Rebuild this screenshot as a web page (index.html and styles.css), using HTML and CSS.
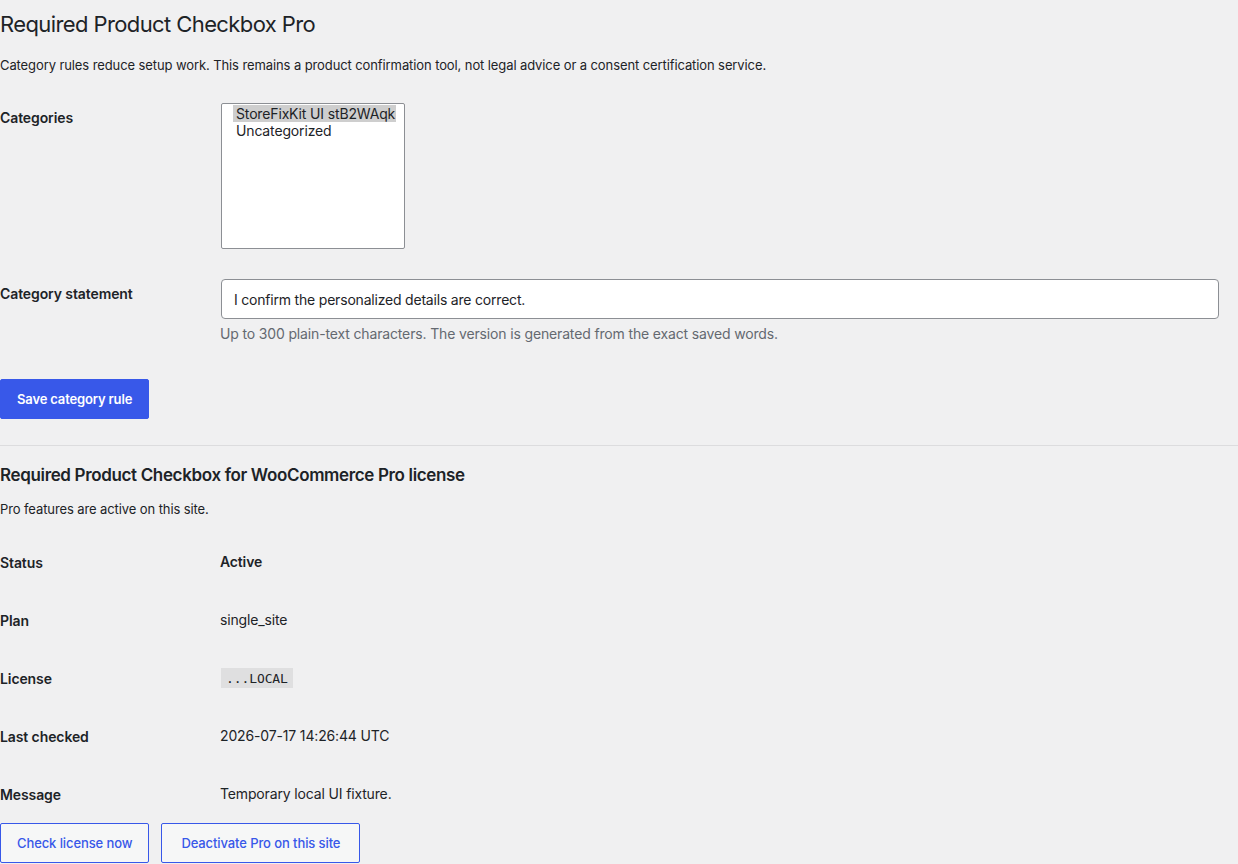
FILE: index.html
```html
<!DOCTYPE html>
<html lang="en">
<head>
    <meta charset="UTF-8">
    <meta name="viewport" content="width=device-width, initial-scale=1.0">
    <title>Required Product Checkbox Pro</title>
    <link rel="stylesheet" href="styles.css">
</head>
<body>
<div class="wrap">
    <h1>Required Product Checkbox Pro</h1>
    <p>Category rules reduce setup work. This remains a product confirmation tool, not legal advice or a consent certification service.</p>

    <form class="rule-form" onsubmit="return false">
        <table class="form-table">
            <tr>
                <th>Categories</th>
                <td>
                    <div class="cat-list">
                        <div class="cat-item selected">StoreFixKit UI stB2WAqk</div>
                        <div class="cat-item">Uncategorized</div>
                    </div>
                </td>
            </tr>
            <tr>
                <th>Category statement</th>
                <td>
                    <input type="text" class="large-text" value="I confirm the personalized details are correct.">
                    <p class="description">Up to 300 plain-text characters. The version is generated from the exact saved words.</p>
                </td>
            </tr>
        </table>
        <p class="submit"><button type="submit" class="button button-primary">Save category rule</button></p>
    </form>

    <hr>

    <h2>Required Product Checkbox for WooCommerce Pro license</h2>
    <p>Pro features are active on this site.</p>

    <table class="form-table license-table">
        <tr><th>Status</th><td><strong>Active</strong></td></tr>
        <tr><th>Plan</th><td>single_site</td></tr>
        <tr><th>License</th><td><code>...LOCAL</code></td></tr>
        <tr><th>Last checked</th><td>2026-07-17 14:26:44 UTC</td></tr>
        <tr><th>Message</th><td>Temporary local UI fixture.</td></tr>
    </table>

    <div class="license-actions">
        <button type="button" class="button">Check license now</button>
        <button type="button" class="button wide">Deactivate Pro on this site</button>
    </div>
</div>
</body>
</html>
```

FILE: styles.css
```css
body {
    margin: 0;
    background: #f0f0f1;
    color: #1d2327;
    font-family: Inter, "Noto Sans", sans-serif;
    font-size: 13px;
    line-height: 1.4em;
    letter-spacing: -0.1px;
}

.wrap h1 {
    font-size: 22px;
    font-weight: 400;
    line-height: 1.3;
    margin: 0;
    padding: 10px 0 4px;
    letter-spacing: -0.6px;
}

.wrap p {
    margin: 13px 0;
    line-height: 1.5;
}

.rule-form {
    margin: 0;
}

.form-table {
    border-collapse: collapse;
    width: 100%;
    margin-top: 0;
}

.rule-form .form-table {
    margin-top: 1px;
}

.form-table th {
    width: 200px;
    padding: 21px 10px 19px 0;
    text-align: left;
    vertical-align: top;
    font-size: 14px;
    font-weight: 600;
    line-height: 1.3;
    letter-spacing: -0.1px;
}

.form-table td {
    padding: 15px 10px;
    vertical-align: top;
    font-size: 14px;
    line-height: 1.3;
    letter-spacing: -0.15px;
}

.cat-list {
    box-sizing: border-box;
    width: 184px;
    height: 146px;
    margin-left: 1px;
    padding: 1px 8px 0 11px;
    background: #fff;
    border: 1px solid #8c8f94;
    border-radius: 2px;
}

.cat-item {
    padding: 0 3px;
    line-height: 17px;
    font-size: 14px;
    white-space: nowrap;
}

.cat-item.selected {
    background: #cecece;
}

.large-text {
    box-sizing: border-box;
    width: 99%;
    height: 40px;
    margin: 0 0 0 1px;
    padding: 0 12px;
    background: #fff;
    border: 1px solid #8c8f94;
    border-radius: 4px;
    color: #1d2327;
    font-family: inherit;
    font-size: 14px;
    letter-spacing: -0.2px;
}

.form-table td p.description {
    margin: 4px 0 0;
    color: #646970;
    font-size: 14px;
    line-height: 1.5;
}

.wrap p.submit {
    margin: 0;
    padding: 20px 0 0;
}

.button {
    box-sizing: border-box;
    height: 40px;
    padding: 0 16px;
    background: #f6f7f7;
    border: 1px solid #3858e9;
    border-radius: 2px;
    color: #3858e9;
    font-family: inherit;
    font-size: 13px;
    font-weight: 500;
    letter-spacing: -0.1px;
    cursor: pointer;
}

.button.wide {
    padding: 0 19px;
}

.button-primary {
    background: #3858e9;
    color: #fff;
    font-weight: 600;
    letter-spacing: -0.15px;
}

hr {
    margin: 26px 0 0;
    border: 0;
    border-top: 1px solid #dcdcde;
}

.wrap h2 {
    font-size: 17px;
    font-weight: 600;
    line-height: 1.3;
    margin: 18px 0 0;
    letter-spacing: -0.35px;
}

.wrap h2 + p {
    margin: 14px 0 13px;
}

.license-table th,
.license-table td {
    vertical-align: middle;
}

.license-table td strong {
    font-weight: 600;
}

code {
    padding: 3px 5px 2px;
    margin-left: 1px;
    background: rgba(0, 0, 0, 0.07);
    font-family: "DejaVu Sans Mono", monospace;
    font-size: 13px;
    letter-spacing: -0.1px;
}

.license-actions {
    display: flex;
    gap: 12px;
    margin-top: -1px;
}
```
